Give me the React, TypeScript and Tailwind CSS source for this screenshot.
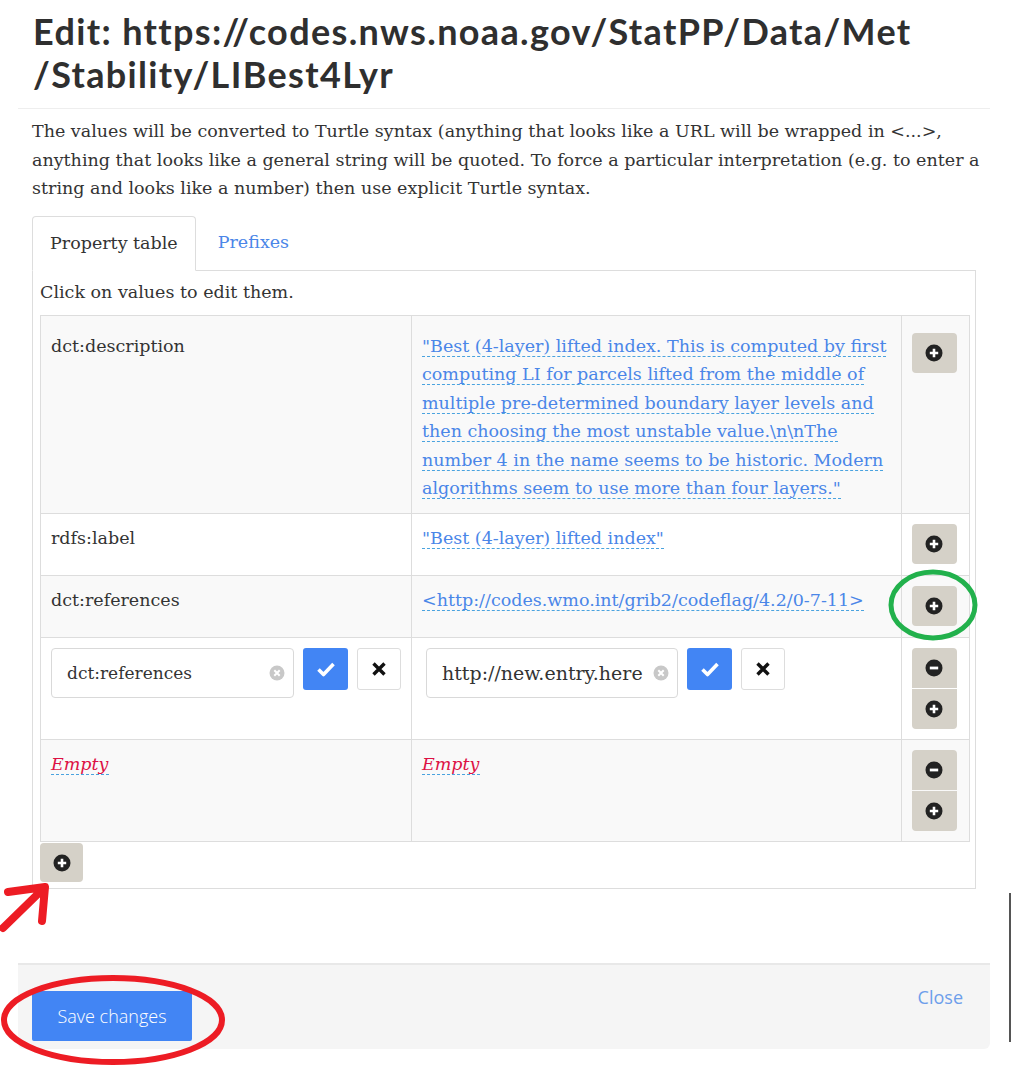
import React from "react";

const serif = "font-['DejaVu_Serif',serif]";

function PlusSign() {
  return (
    <svg width="18" height="18" viewBox="0 0 18 18">
      <circle cx="9" cy="9" r="8.5" fill="#222" />
      <path d="M9 4.8v8.4M4.8 9h8.4" stroke="#fff" strokeWidth="2.6" />
    </svg>
  );
}

function MinusSign() {
  return (
    <svg width="18" height="18" viewBox="0 0 18 18">
      <circle cx="9" cy="9" r="8.5" fill="#222" />
      <path d="M4.8 9h8.4" stroke="#fff" strokeWidth="2.8" />
    </svg>
  );
}

function OkIcon() {
  return (
    <svg width="20" height="16" viewBox="0 0 20 16">
      <path d="M2.5 8.5l5 5L17.5 3" fill="none" stroke="#fff" strokeWidth="3.6" strokeLinejoin="round" />
    </svg>
  );
}

function RemoveIcon() {
  return (
    <svg width="16" height="16" viewBox="0 0 16 16">
      <path d="M2.5 2.5l11 11M13.5 2.5l-11 11" stroke="#111" strokeWidth="3.4" />
    </svg>
  );
}

function ClearIcon() {
  return (
    <svg width="16" height="16" viewBox="0 0 16 16">
      <circle cx="8" cy="8" r="7.5" fill="#c8c8c8" />
      <path d="M5.3 5.3l5.4 5.4M10.7 5.3l-5.4 5.4" stroke="#fff" strokeWidth="2" />
    </svg>
  );
}

function GrayBtn({ children, className = "" }: { children: React.ReactNode; className?: string }) {
  return (
    <div className={`w-[45px] h-[40px] bg-[#d5d1c8] flex items-center justify-center ${className}`}>{children}</div>
  );
}

function EditField({ value, width, size }: { value: string; width: string; size: string }) {
  return (
    <div className="flex items-start">
      <div className={`${width} h-[50px] border border-[#d9d9d9] rounded-[4px] bg-white flex items-center justify-between pl-[15px] pr-[8px]`}>
        <span className={`${size} text-[#333] whitespace-nowrap`}>{value}</span>
        <ClearIcon />
      </div>
      <div className="ml-[9px] w-[45px] h-[42px] bg-[#4285f4] rounded-[3px] flex items-center justify-center">
        <OkIcon />
      </div>
      <div className="ml-[9px] w-[44px] h-[42px] bg-white border border-[#ddd] rounded-[3px] flex items-center justify-center">
        <RemoveIcon />
      </div>
    </div>
  );
}

function Editable({ children, empty = false }: { children: React.ReactNode; empty?: boolean }) {
  return (
    <span
      className={`border-b border-dashed border-[#4aa3df] ${empty ? "italic text-[#dd1144]" : "text-[#4a86e8]"}`}
    >
      {children}
    </span>
  );
}

export default function App() {
  const desc = [
    "\"Best (4-layer) lifted index. This is computed by first",
    "computing LI for parcels lifted from the middle of",
    "multiple pre-determined boundary layer levels and",
    "then choosing the most unstable value.\\n\\nThe",
    "number 4 in the name seems to be historic. Modern",
    "algorithms seem to use more than four layers.\"",
  ];

  return (
    <div className={`relative w-[1012px] h-[1067px] bg-white text-[#333] ${serif}`}>
      <div className="ml-[18px] w-[972px]">
        {/* header */}
        <div className="h-[109px] border-b border-[#eee] px-[15px] pt-[10px]">
          <h1 className="font-['Lato',sans-serif] font-bold text-[36px] leading-[43px] tracking-[1.35px] text-[#2f2f2f] whitespace-nowrap">
            Edit: https://codes.nws.noaa.gov/StatPP/Data/Met
            <br />
            /Stability/LIBest4Lyr
          </h1>
        </div>

        {/* body */}
        <div className="px-[14px] pt-[8px]">
          <p className="text-[17.5px] leading-[28.5px] whitespace-nowrap">
            The values will be converted to Turtle syntax (anything that looks like a URL will be wrapped in &lt;...&gt;,
            <br />
            anything that looks like a general string will be quoted. To force a particular interpretation (e.g. to enter a
            <br />
            string and looks like a number) then use explicit Turtle syntax.
          </p>

          {/* tabs */}
          <div className="mt-[13px] flex items-end border-b border-[#ddd] h-[55px]">
            <div className="h-[55px] px-[17px] border border-[#ddd] border-b-white rounded-t-[4px] bg-white flex items-center -mb-px text-[17.5px]">
              Property table
            </div>
            <div className="h-[54px] ml-[2px] px-[20px] flex items-center text-[17.5px] text-[#4a86e8]">Prefixes</div>
          </div>

          <div className="border border-t-0 border-[#ddd] px-[7px] pb-[6px]">
            <div className="h-[44px] flex items-center text-[17.5px]">Click on values to edit them.</div>

            <table className="w-[930px] border-collapse text-[17.5px] leading-[28.6px]">
              <colgroup>
                <col className="w-[370px]" />
                <col className="w-[490px]" />
                <col className="w-[70px]" />
              </colgroup>
              <tbody>
                <tr className="bg-[#f9f9f9]">
                  <td className="border border-[#ddd] align-top px-[10px] pt-[16px] pb-[10px]">dct:description</td>
                  <td className="border border-[#ddd] align-top px-[10px] pt-[16px] pb-[10px] whitespace-nowrap">
                    <Editable>
                      {desc.map((l, i) => (
                        <React.Fragment key={i}>
                          {l}
                          {i < desc.length - 1 && <br />}
                        </React.Fragment>
                      ))}
                    </Editable>
                  </td>
                  <td className="border border-[#ddd] align-top pl-[10px] pt-[17px]">
                    <GrayBtn className="rounded-[4px]">
                      <PlusSign />
                    </GrayBtn>
                  </td>
                </tr>
                <tr className="bg-white">
                  <td className="border border-[#ddd] align-top px-[10px] pt-[10px] pb-[10px] h-[62px]">rdfs:label</td>
                  <td className="border border-[#ddd] align-top px-[10px] pt-[10px]">
                    <Editable>"Best (4-layer) lifted index"</Editable>
                  </td>
                  <td className="border border-[#ddd] align-top pl-[10px] pt-[10px]">
                    <GrayBtn className="rounded-[4px]">
                      <PlusSign />
                    </GrayBtn>
                  </td>
                </tr>
                <tr className="bg-[#f9f9f9]">
                  <td className="border border-[#ddd] align-top px-[10px] pt-[10px] pb-[10px] h-[62px]">dct:references</td>
                  <td className="border border-[#ddd] align-top px-[10px] pt-[10px] whitespace-nowrap">
                    <Editable>&lt;http://codes.wmo.int/grib2/codeflag/4.2/0-7-11&gt;</Editable>
                  </td>
                  <td className="border border-[#ddd] align-top pl-[10px] pt-[10px]">
                    <GrayBtn className="rounded-[4px]">
                      <PlusSign />
                    </GrayBtn>
                  </td>
                </tr>
                <tr className="bg-white">
                  <td className="border border-[#ddd] align-top px-[10px] pt-[10px] pb-[10px]">
                    <EditField value="dct:references" width="w-[243px]" size="text-[17px]" />
                  </td>
                  <td className="border border-[#ddd] align-top px-[14px] pt-[10px]">
                    <EditField value="http://new.entry.here" width="w-[252px]" size="text-[19px]" />
                  </td>
                  <td className="border border-[#ddd] align-top pl-[10px] pt-[10px] pb-[10px]">
                    <div className="flex flex-col gap-px">
                      <GrayBtn className="rounded-t-[4px]">
                        <MinusSign />
                      </GrayBtn>
                      <GrayBtn className="rounded-b-[4px]">
                        <PlusSign />
                      </GrayBtn>
                    </div>
                  </td>
                </tr>
                <tr className="bg-[#f9f9f9]">
                  <td className="border border-[#ddd] align-top px-[10px] pt-[10px] pb-[10px]">
                    <Editable empty>Empty</Editable>
                  </td>
                  <td className="border border-[#ddd] align-top px-[10px] pt-[10px]">
                    <Editable empty>Empty</Editable>
                  </td>
                  <td className="border border-[#ddd] align-top pl-[10px] pt-[10px] pb-[10px]">
                    <div className="flex flex-col gap-px">
                      <GrayBtn className="rounded-t-[4px]">
                        <MinusSign />
                      </GrayBtn>
                      <GrayBtn className="rounded-b-[4px]">
                        <PlusSign />
                      </GrayBtn>
                    </div>
                  </td>
                </tr>
              </tbody>
            </table>

            <div className="mt-[1px] w-[43px] h-[39px] bg-[#d5d1c8] rounded-[4px] flex items-center justify-center">
              <PlusSign />
            </div>
          </div>
        </div>

        {/* footer */}
        <div className="mt-[74px] h-[86px] bg-[#f5f5f5] border-t-2 border-[#e8e8e8] rounded-b-[6px] flex items-start justify-between px-[14px] pt-[19px] font-['Open_Sans',sans-serif]">
          <div className="mt-[7px] w-[160px] h-[50px] bg-[#4285f4] rounded-[2px] text-white text-[18px] font-light flex items-center justify-center">
            Save changes
          </div>
          <div className="text-[18px] text-[#6d9eeb] pr-[13px]">Close</div>
        </div>
      </div>

      {/* dark edge */}
      <div className="absolute left-[1009px] top-[893px] w-[2px] h-[149px] bg-[#555]" />

      {/* annotations */}
      <svg className="absolute left-0 top-0 pointer-events-none" width="1012" height="1067">
        <ellipse cx="933" cy="605" rx="42" ry="33" fill="none" stroke="#22b14c" strokeWidth="5" />
        <ellipse cx="113" cy="1020" rx="109" ry="42" fill="none" stroke="#ed1c24" strokeWidth="6" />
        <path d="M3 928L44 888M8 892L45 887L42 921" fill="none" stroke="#ed1c24" strokeWidth="8" strokeLinecap="round" strokeLinejoin="round" />
      </svg>
    </div>
  );
}
